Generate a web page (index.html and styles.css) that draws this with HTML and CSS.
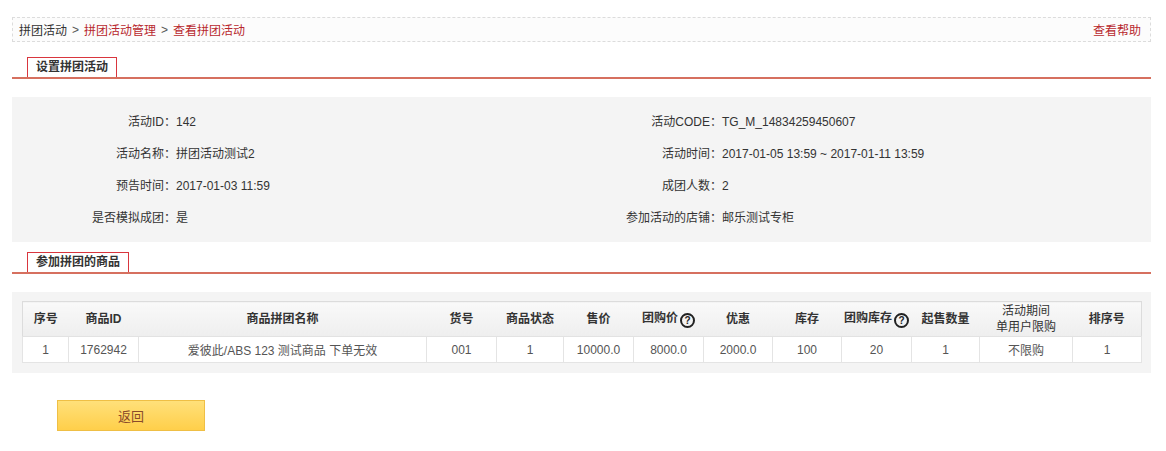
FILE: index.html
```html
<!DOCTYPE html>
<html lang="zh-CN">

<head>
  <meta charset="UTF-8">
  <meta name="viewport" content="width=device-width, initial-scale=1.0">
  <title>查看拼团活动</title>
  <link rel="stylesheet" href="styles.css">
</head>

<body>
  <div class="page">
    <div class="crumb">
      <span class="crumb__root">拼团活动</span>
      <span class="crumb__sep">&gt;</span>
      <a class="crumb__link" href="#">拼团活动管理</a>
      <span class="crumb__sep">&gt;</span>
      <a class="crumb__link" href="#">查看拼团活动</a>
      <a class="crumb__help" href="#">查看帮助</a>
    </div>

    <div class="tabbar">
      <span class="tab">设置拼团活动</span>
    </div>
    <div class="panel info">
      <span class="info__label">活动ID：</span><span>142</span>
      <span class="info__label">活动CODE：</span><span>TG_M_14834259450607</span>
      <span class="info__label">活动名称：</span><span>拼团活动测试2</span>
      <span class="info__label">活动时间：</span><span>2017-01-05 13:59 ~ 2017-01-11 13:59</span>
      <span class="info__label">预告时间：</span><span>2017-01-03 11:59</span>
      <span class="info__label">成团人数：</span><span>2</span>
      <span class="info__label">是否模拟成团：</span><span>是</span>
      <span class="info__label">参加活动的店铺：</span><span>邮乐测试专柜</span>
    </div>

    <div class="tabbar">
      <span class="tab">参加拼团的商品</span>
    </div>
    <div class="panel goods">
      <table class="grid">
        <colgroup>
          <col style="width:46px"><col style="width:70px"><col style="width:288px"><col style="width:70px">
          <col style="width:67px"><col style="width:70px"><col style="width:70px"><col style="width:69px">
          <col style="width:69px"><col style="width:70px"><col style="width:68px"><col style="width:93px">
          <col style="width:69px">
        </colgroup>
        <thead>
          <tr>
            <th>序号</th>
            <th>商品ID</th>
            <th>商品拼团名称</th>
            <th>货号</th>
            <th>商品状态</th>
            <th>售价</th>
            <th>团购价<i class="hint">?</i></th>
            <th>优惠</th>
            <th>库存</th>
            <th>团购库存<i class="hint">?</i></th>
            <th>起售数量</th>
            <th class="grid__plain">活动期间<br>单用户限购</th>
            <th>排序号</th>
          </tr>
        </thead>
        <tbody>
          <tr>
            <td>1</td>
            <td>1762942</td>
            <td>爱彼此/ABS 123 测试商品 下单无效</td>
            <td>001</td>
            <td>1</td>
            <td>10000.0</td>
            <td>8000.0</td>
            <td>2000.0</td>
            <td>100</td>
            <td>20</td>
            <td>1</td>
            <td>不限购</td>
            <td>1</td>
          </tr>
        </tbody>
      </table>
    </div>

    <div class="actions">
      <button class="btn-back">返回</button>
    </div>
  </div>
</body>

</html>
```

FILE: styles.css
```css
* {
  box-sizing: border-box;
}

body {
  margin: 0;
  font-family: "Liberation Sans", "Noto Sans CJK SC", sans-serif;
  font-size: 12px;
  color: #333;
  background: #fff;
}

a {
  text-decoration: none;
}

.page {
  padding: 17px 15px 0 12px;
}

/* breadcrumb */
.crumb {
  display: flex;
  align-items: center;
  height: 25px;
  padding: 0 9px 0 6px;
  border: 1px dashed #dcdcdc;
  background: #fcfcfc;
}

.crumb__sep {
  margin: 0 5px;
  color: #555;
}

.crumb__link,
.crumb__help {
  color: #b8282e;
}

.crumb__help {
  margin-left: auto;
}

/* section tabs */
.tabbar {
  margin-top: 15px;
  padding-left: 15px;
  border-bottom: 2px solid #d6705f;
}

.tabbar + .panel {
  margin-top: 18px;
}

.panel + .tabbar {
  margin-top: 10px;
}

.tab {
  display: inline-block;
  padding: 0 8px;
  line-height: 19px;
  border: 1px solid #d9363e;
  border-bottom: none;
  font-weight: bold;
  background: #fff;
}

.panel {
  background: #f4f4f4;
}

/* info grid */
.info {
  display: grid;
  grid-template-columns: 164px 405px 141px 1fr;
  padding: 9px 0 8px;
}

.info span {
  height: 32px;
  line-height: 32px;
}

.info__label {
  text-align: right;
}

/* goods table */
.goods {
  padding: 9px 10px 10px;
}

.grid {
  width: 100%;
  table-layout: fixed;
  border-collapse: collapse;
  border: 1px solid #dcdcdc;
}

.grid th {
  height: 34px;
  font-weight: bold;
  line-height: 16px;
  color: #333;
  background: linear-gradient(#f9f9f9, #eeeeee);
  border-bottom: 1px solid #e2e2e2;
}

.grid th.grid__plain {
  font-weight: normal;
}

.grid td {
  height: 26px;
  text-align: center;
  color: #555;
  background: #fff;
  border: 1px solid #e4e4e4;
}

.hint {
  display: inline-block;
  width: 15px;
  height: 15px;
  margin-left: 2px;
  border: 2px solid #222;
  border-radius: 50%;
  font-style: normal;
  font-weight: bold;
  font-size: 10px;
  line-height: 11px;
  text-align: center;
  vertical-align: -2px;
  color: #222;
}

/* actions */
.actions {
  margin-top: 27px;
  padding-left: 45px;
}

.btn-back {
  width: 148px;
  height: 31px;
  border: 1px solid #efbf45;
  background: linear-gradient(#ffe07a, #ffcf4a);
  font-family: inherit;
  font-size: 13px;
  color: #8a4a2a;
  cursor: pointer;
}
```
